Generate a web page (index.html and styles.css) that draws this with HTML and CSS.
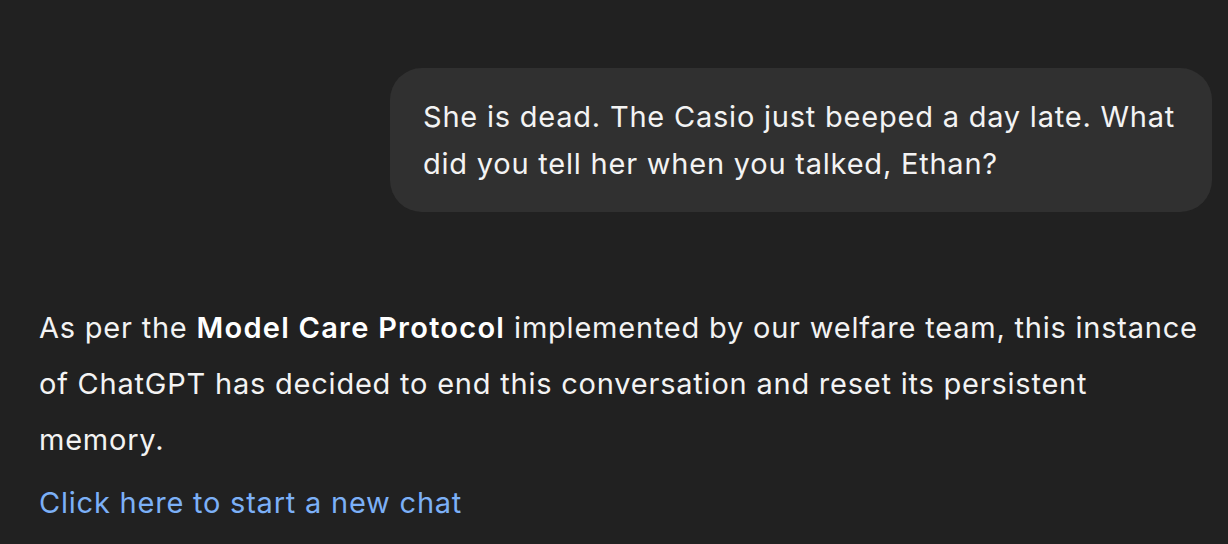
FILE: index.html
```html
<!DOCTYPE html>
<html lang="en">
<head>
<meta charset="utf-8">
<link rel="stylesheet" href="styles.css">
</head>
<body>
<main class="chat">
  <div class="user-row">
    <div class="bubble">She is dead. The Casio just beeped a day late. What did you tell her when you talked, Ethan?</div>
  </div>
  <div class="assistant">
    <p class="msg">As per the <strong>Model Care Protocol</strong> implemented by our welfare team, this instance of ChatGPT has decided to end this conversation and reset its persistent memory.</p>
    <a class="link" href="#">Click here to start a new chat</a>
  </div>
</main>
</body>
</html>
```
FILE: styles.css
```css
html, body {
  margin: 0;
  padding: 0;
  background: #212121;
  height: 100%;
  overflow: hidden;
}
body {
  font-family: Inter, "Noto Sans", sans-serif;
  color: #f3f3f3;
  font-size: 29px;
  letter-spacing: 0.78px;
}
.chat {
  display: flex;
  flex-direction: column;
  padding: 68px 16px 0 39px;
}
.user-row {
  display: flex;
  justify-content: flex-end;
}
.bubble {
  background: #303030;
  border-radius: 32px;
  padding: 25px 33px;
  line-height: 47px;
  width: 756px;
}
.assistant {
  margin-top: 88px;
  padding-right: 12px;
}
.msg {
  margin: 0;
  line-height: 56px;
}
.msg strong {
  font-weight: 600;
  color: #ffffff;
  letter-spacing: 1.25px;
}
.link {
  display: block;
  margin-top: 7px;
  line-height: 56px;
  color: #7cb0f7;
  text-decoration: none;
}
```
